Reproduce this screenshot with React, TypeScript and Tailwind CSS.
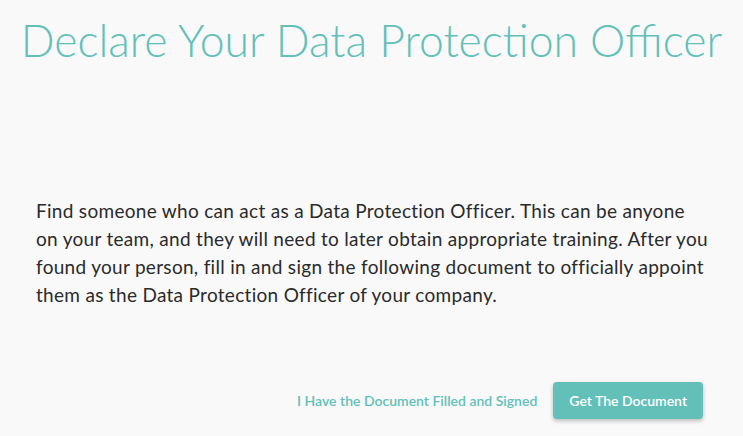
export default function App() {
  return (
    <div
      className="flex h-[436px] w-full flex-col bg-[#f9f9f9] text-[#333]"
      style={{ fontFamily: 'Lato, "Open Sans", sans-serif' }}
    >
      <h1 className="pt-[12px] text-center text-[44.5px] font-light leading-[56px] text-[#62c0b8]">
        Declare Your Data Protection Officer
      </h1>
      <div className="flex flex-1 items-center pb-[30px] pl-[36px] pr-[20px] pt-[86px]">
        <p className="whitespace-nowrap text-[19px] leading-[28px] tracking-[0.3px] text-[#2a2a2a]">
          Find someone who can act as a Data Protection Officer. This can be anyone
          <br />
          on your team, and they will need to later obtain appropriate training. After you
          <br />
          found your person, fill in and sign the following document to officially appoint
          <br />
          them as the Data Protection Officer of your company.
        </p>
      </div>
      <div className="flex items-center justify-end gap-4 pb-[17px] pr-[40px]">
        <button className="text-[14px] font-semibold text-[#62c0b8]">
          I Have the Document Filled and Signed
        </button>
        <button className="h-[37px] rounded-[4px] bg-[#62c0b8] px-4 text-[14px] font-semibold text-white shadow-[0_2px_4px_rgba(0,0,0,0.25)]">
          Get The Document
        </button>
      </div>
    </div>
  );
}
